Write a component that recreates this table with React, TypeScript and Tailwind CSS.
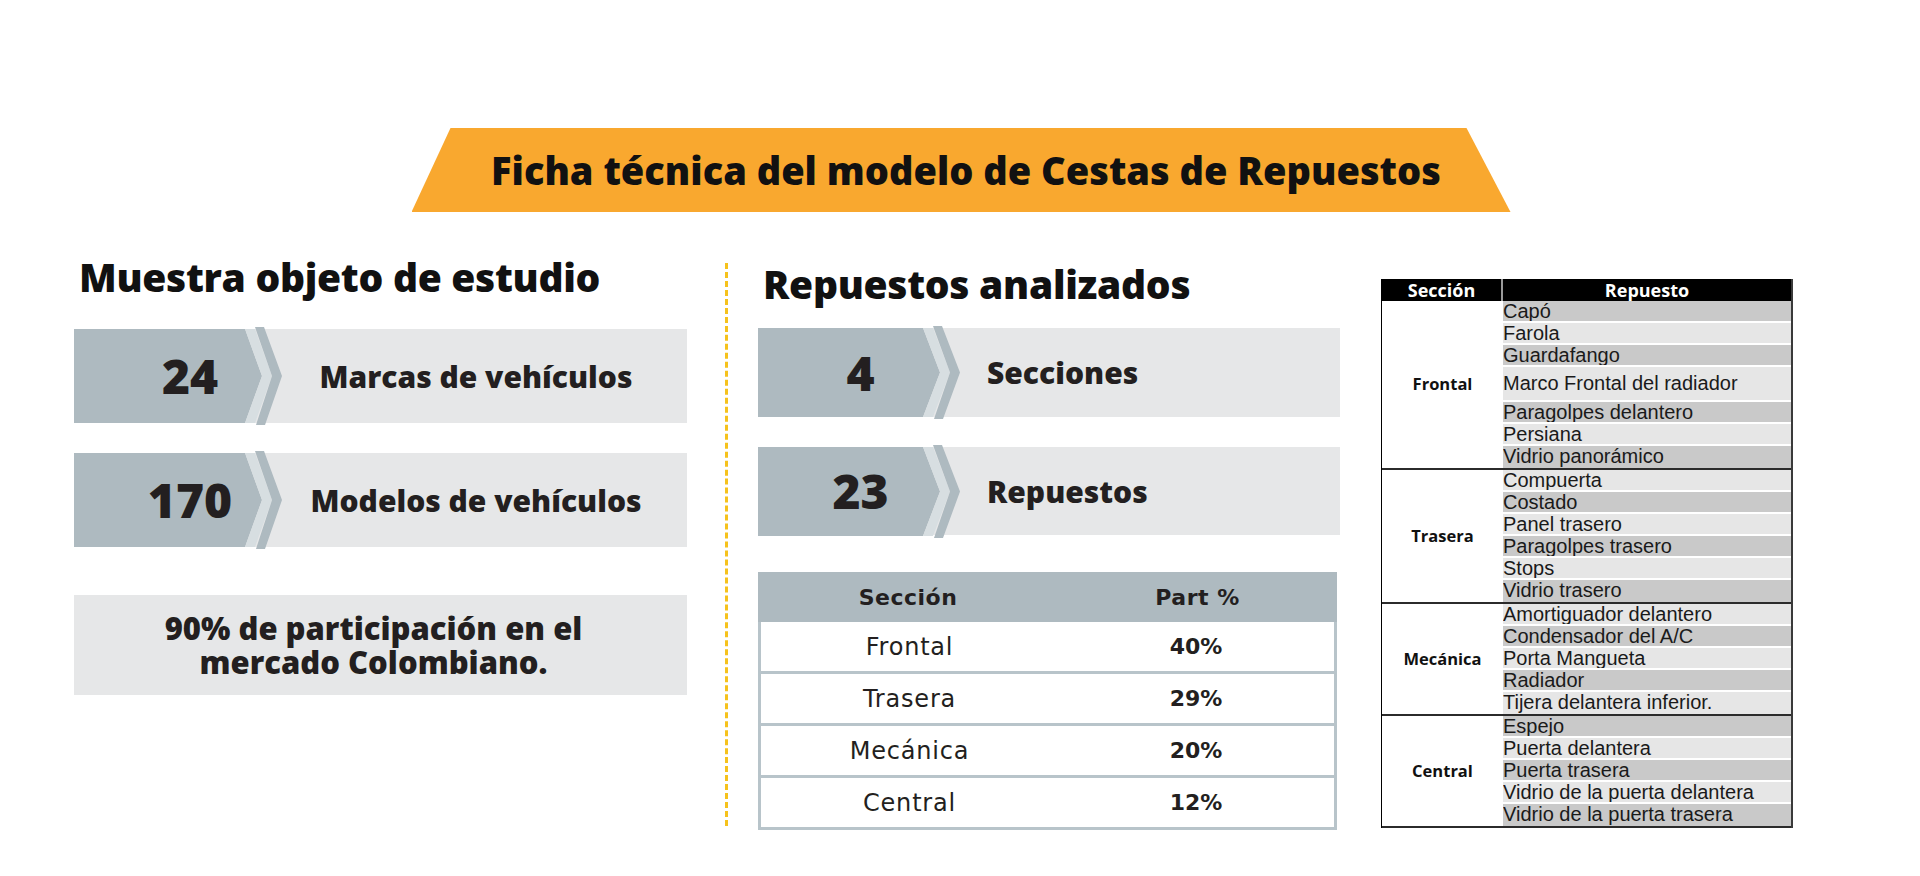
const frontal = [
  "Capó",
  "Farola",
  "Guardafango",
  "Marco Frontal del radiador",
  "Paragolpes delantero",
  "Persiana",
  "Vidrio panorámico",
];

const groups = [
  { name: "Frontal", items: frontal, startDark: true },
  {
    name: "Trasera",
    items: ["Compuerta", "Costado", "Panel trasero", "Paragolpes trasero", "Stops", "Vidrio trasero"],
    startDark: false,
  },
  {
    name: "Mecánica",
    items: [
      "Amortiguador delantero",
      "Condensador del A/C",
      "Porta Mangueta",
      "Radiador",
      "Tijera delantera inferior.",
    ],
    startDark: false,
  },
  {
    name: "Central",
    items: [
      "Espejo",
      "Puerta delantera",
      "Puerta trasera",
      "Vidrio de la puerta delantera",
      "Vidrio de la puerta trasera",
    ],
    startDark: true,
  },
];

const shares = [
  { name: "Frontal", part: "40%" },
  { name: "Trasera", part: "29%" },
  { name: "Mecánica", part: "20%" },
  { name: "Central", part: "12%" },
];

function Chevron({ d, h }: { d: number; h: number }) {
  const m = h / 2;
  return (
    <svg
      className="absolute left-0 top-0 overflow-visible"
      width={d + 40}
      height={h}
      viewBox={`0 0 ${d + 40} ${h}`}
    >
      <polygon points={`0,0 ${d},0 ${d + 17},${m} ${d},${h} 0,${h}`} fill="#AEBAC0" />
      <polygon
        points={`${d},0 ${d + 10},0 ${d + 27},${m} ${d + 10},${h} ${d},${h} ${d + 17},${m}`}
        fill="#D7DEE1"
      />
      <polygon
        points={`${d + 10},-2 ${d + 19},-2 ${d + 37},${m} ${d + 20},${h + 2} ${d + 11},${h + 2} ${d + 27},${m}`}
        fill="#AEBAC0"
      />
    </svg>
  );
}

function StatLeft({ value, label }: { value: string; label: string }) {
  return (
    <div className="flex h-[94px] items-center bg-[#E6E7E8]">
      <div className="relative flex h-full w-[211px] shrink-0 items-center justify-center pl-[21px]">
        <Chevron d={171} h={94} />
        <span className="relative text-[48px] font-extrabold leading-none text-[#231F20]">{value}</span>
      </div>
      <div className="flex-1 pr-[20px] text-center text-[30px] font-extrabold text-[#231F20]">{label}</div>
    </div>
  );
}

function StatMid({ value, label, h }: { value: string; label: string; h: string }) {
  return (
    <div className={`flex items-center bg-[#E6E7E8] ${h}`}>
      <div className="relative flex h-full w-[205px] shrink-0 items-center justify-center">
        <Chevron d={165} h={89} />
        <span className="relative text-[48px] font-extrabold leading-none text-[#231F20]">{value}</span>
      </div>
      <div className="flex-1 pl-[24px] text-[30px] font-extrabold text-[#231F20]">{label}</div>
    </div>
  );
}

export default function App() {
  return (
    <div className="h-[876px] w-[1920px] overflow-hidden bg-white pt-[128px] font-['Open_Sans',sans-serif] text-[#111]">
      <div className="flex justify-center">
        <div className="ml-[2px] flex h-[84px] w-[1099px] items-center justify-center bg-[#F9A82F] pl-[10px] [clip-path:polygon(39px_0,1055px_0,100%_100%,0_100%)]">
          <h1 className="text-[38px] font-extrabold text-[#111]">
            Ficha técnica del modelo de Cestas de Repuestos
          </h1>
        </div>
      </div>

      <div className="mt-[43px] flex items-start">
        <div className="ml-[74px] w-[613px]">
          <h2 className="h-[44px] pl-[5px] text-[39px] font-extrabold leading-[44px] tracking-[-0.3px]">
            Muestra objeto de estudio
          </h2>
          <div className="mt-[30px]">
            <StatLeft value="24" label="Marcas de vehículos" />
          </div>
          <div className="mt-[30px]">
            <StatLeft value="170" label="Modelos de vehículos" />
          </div>
          <div className="mt-[48px] flex h-[100px] items-center justify-center bg-[#E6E7E8] pr-[14px] text-center text-[31px] font-extrabold leading-[34px] text-[#231F20]">
            <p>
              90% de participación en el
              <br />
              mercado Colombiano.
            </p>
          </div>
        </div>

        <div className="ml-[38px] mt-[8px] h-[563px] border-l-[3px] border-dashed border-[#F6C21C]" />

        <div className="ml-[30px] w-[582px]">
          <h2 className="mt-[7px] h-[44px] pl-[5px] text-[39px] font-extrabold leading-[44px] tracking-[-0.3px]">
            Repuestos analizados
          </h2>
          <div className="mt-[22px]">
            <StatMid value="4" label="Secciones" h="h-[89px]" />
          </div>
          <div className="mt-[30px]">
            <StatMid value="23" label="Repuestos" h="h-[88px]" />
          </div>
          <div className="mt-[37px] w-[579px] font-['DejaVu_Sans',sans-serif] text-[#231F20]">
            <div className="grid h-[50px] grid-cols-[300px_1fr] items-center bg-[#AEBAC0] text-[22px] font-bold tracking-[0.5px]">
              <div className="text-center">Sección</div>
              <div className="text-center">Part %</div>
            </div>
            {shares.map((s) => (
              <div
                key={s.name}
                className="grid h-[52px] grid-cols-[300px_1fr] items-center border-x-[3px] border-b-[3px] border-[#B8C4CA] bg-white"
              >
                <div className="pr-[3px] text-center text-[24px] tracking-[0.8px]">{s.name}</div>
                <div className="pr-[3px] text-center text-[22px] font-bold">{s.part}</div>
              </div>
            ))}
          </div>
        </div>

        <div className="ml-[41px] mt-[24px] w-[412px] border-l border-r-2 border-l-black border-r-[#3a3a3a]">
          <div className="flex h-[22px] bg-black text-[18px] font-bold leading-[22px] text-white">
            <div className="w-[121px] border-r-2 border-[#9a9a9a] text-center">Sección</div>
            <div className="flex-1 text-center">Repuesto</div>
          </div>
          {groups.map((g) => (
            <div key={g.name} className="flex border-b-2 border-[#2b2b2b]">
              <div className="flex w-[121px] shrink-0 items-center justify-center bg-white text-[16.5px] font-bold text-[#111]">
                {g.name}
              </div>
              <div className="flex-1 font-['Liberation_Sans',sans-serif] text-[20px] text-[#1a1a1a]">
                {g.items.map((it, i) => {
                  const dark = g.startDark ? i % 2 === 0 : i % 2 === 1;
                  const tall = it === "Marco Frontal del radiador";
                  return (
                    <div
                      key={it}
                      className={`${tall ? "h-[35px] leading-[33px]" : "h-[22px] leading-[20px]"} ${
                        i === g.items.length - 1 ? "" : "border-b-2 border-white"
                      } ${dark ? "bg-[#C9C9C9]" : "bg-[#E6E6E6]"} overflow-hidden whitespace-nowrap`}
                    >
                      {it}
                    </div>
                  );
                })}
              </div>
            </div>
          ))}
        </div>
      </div>
    </div>
  );
}
